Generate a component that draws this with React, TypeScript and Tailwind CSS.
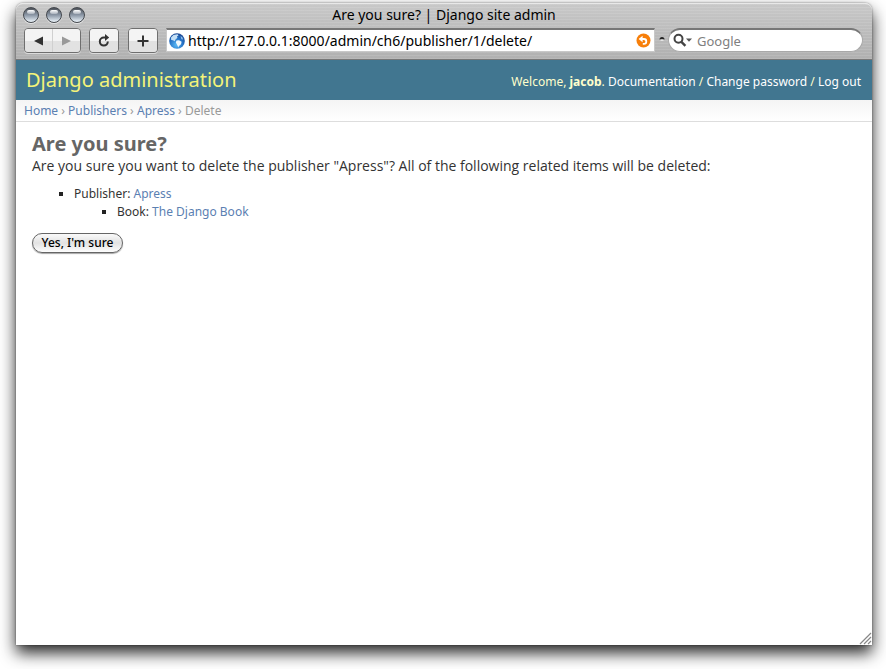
import type { ReactNode } from "react";

function TrafficLight({ label }: { label: string }) {
  return (
    <button
      type="button"
      aria-label={label}
      className="flex size-4 items-end justify-center rounded-full border border-[#44484e] bg-linear-to-b from-[#4d5259] via-[#8b97a6] to-[#eef6fc] shadow-[0_1px_0_#e4e4e4]"
    >
      <span className="mb-2 h-1 w-2 rounded-full bg-linear-to-b from-white to-[#aab2bd]" />
    </button>
  );
}

function ToolButton({ label, children }: { label: string; children: ReactNode }) {
  return (
    <button
      type="button"
      aria-label={label}
      className="flex h-[23px] w-7 items-center justify-center bg-linear-to-b from-[#f4f4f4] from-50% to-[#e2e2e2] to-50%"
    >
      {children}
    </button>
  );
}

const group = "flex shrink-0 overflow-hidden rounded-[4px] border border-[#6f6f6f] shadow-[0_1px_0_#dcdcdc]";

function Toolbar() {
  return (
    <div className="flex h-8 items-start pr-[9px] pl-2">
      <div className={`${group} w-[57px]`}>
        <ToolButton label="Back">
          <svg width="12" height="12" viewBox="0 0 12 12" aria-hidden="true">
            <path d="M1 6 10 1.5v9z" fill="#333" />
          </svg>
        </ToolButton>
        <div className="w-px shrink-0 bg-[#d0d0d0]" />
        <ToolButton label="Forward">
          <svg width="12" height="12" viewBox="0 0 12 12" aria-hidden="true">
            <path d="M10 6 1 1.5v9z" fill="#999" />
          </svg>
        </ToolButton>
      </div>
      <div className={`${group} ml-2`}>
        <ToolButton label="Reload">
          <svg width="14" height="14" viewBox="0 0 14 14" fill="none" aria-hidden="true">
            <path d="M9 3.6H6.8a4 4 0 1 0 4 4" stroke="#333" strokeWidth="2" />
            <path d="M8 0v7l4.2-3.4z" fill="#333" />
          </svg>
        </ToolButton>
      </div>
      <div className={`${group} ml-[9px]`}>
        <ToolButton label="Add bookmark">
          <svg width="12" height="12" viewBox="0 0 12 12" aria-hidden="true">
            <path d="M6 .5v11M.5 6h11" stroke="#333" strokeWidth="2" />
          </svg>
        </ToolButton>
      </div>
      <div className="ml-2 flex h-6 min-w-0 flex-1 items-center border border-t-2 border-[#c8c8c8] border-t-[#777] bg-white pr-[3px] pl-0.5">
        <svg className="shrink-0" width="16" height="16" viewBox="0 0 16 16" aria-hidden="true">
          <defs>
            <radialGradient id="globe" cx="0.45" cy="0.75" r="0.75">
              <stop offset="0" stopColor="#58b8f5" />
              <stop offset="0.6" stopColor="#2470c4" />
              <stop offset="1" stopColor="#1d4690" />
            </radialGradient>
          </defs>
          <circle cx="8" cy="8" r="7.8" fill="url(#globe)" />
          <path d="M2 4.5 4.5 2l4-.8 1 1.2-1.6 1.2.6 1.2L6.5 6.5l-.8 1.8L4 7.2 2.2 7z" fill="#c4e0f6" />
          <path d="M7.5 7.5 10 7.2l2.6 1.6-.6 2.4-2 1.8-.8 1.6-1-2.6-1.4-2.4z" fill="#f0f8fd" />
          <path d="m11.5 3 1.8 1.2.8 2.4-1.7-.4z" fill="#8fc0ea" />
        </svg>
        <input
          aria-label="Address"
          defaultValue="http://127.0.0.1:8000/admin/ch6/publisher/1/delete/"
          className="ml-[3px] h-5 min-w-0 flex-1 bg-transparent text-sm text-black outline-none"
        />
        <button type="button" aria-label="Snap back" className="shrink-0">
          <svg width="15" height="15" viewBox="0 0 15 15" fill="none" aria-hidden="true">
            <circle cx="7.5" cy="7.5" r="7" fill="#f77f0a" />
            <path d="M5.5 6h2.4a2.4 2.4 0 0 1 0 4.8H6.8" stroke="#fff" strokeWidth="1.8" />
            <path d="M2.6 6.1 6.6 2.8v6.4z" fill="#fff" />
          </svg>
        </button>
      </div>
      <svg className="mr-0.5 ml-[3px] mt-2 shrink-0" width="8" height="6" viewBox="0 0 8 6" aria-hidden="true">
        <path d="M1.5 3.4a2.5 2.5 0 0 1 5 0z" fill="#222" />
        <path d="M2.5 3.4h3v1.4h-3z" fill="#eee" />
      </svg>
      <div className="flex h-6 w-[195px] shrink-0 items-center rounded-full border border-t-2 border-[#a8a8a8] border-t-[#777] bg-white pl-1">
        <svg className="shrink-0" width="20" height="15" viewBox="0 0 20 15" fill="none" aria-hidden="true">
          <circle cx="5.5" cy="5.8" r="4" stroke="#444" strokeWidth="2" />
          <path d="m8.4 8.8 4 4" stroke="#444" strokeWidth="2.4" />
          <path d="M13 5.5h6l-3 3.2z" fill="#555" />
        </svg>
        <input
          aria-label="Search"
          placeholder="Google"
          className="ml-1 h-5 min-w-0 flex-1 bg-transparent text-[13px] outline-none placeholder:text-[#808080]"
        />
      </div>
    </div>
  );
}

function Crumb({ children }: { children: ReactNode }) {
  return (
    <>
      <a href="#" className="text-[#5b80b2]">{children}</a>
      {" › "}
    </>
  );
}

export default function App() {
  return (
    <div className="flex min-h-screen flex-col bg-white pt-[3px] pr-3.5 pb-6 pl-4 font-['Noto_Sans',sans-serif]">
      <div className="flex flex-1 flex-col rounded-t-[7px] shadow-[0_8px_16px_rgba(0,0,0,0.85),0_0_2px_rgba(0,0,0,0.5)]">
        <div className="h-[57px] rounded-t-[7px] border-t border-b border-t-[#e8e8e8] border-b-[#777] bg-[repeating-linear-gradient(180deg,rgba(255,255,255,0.10)_0px,rgba(255,255,255,0.10)_1px,transparent_1px,transparent_3px),linear-gradient(180deg,#c8c8c8,#b0b0b0)]">
          <div className="grid h-6 grid-cols-[1fr_auto_1fr] items-center px-[7px] pb-0.5">
            <div className="flex gap-[7px]">
              <TrafficLight label="Close" />
              <TrafficLight label="Minimize" />
              <TrafficLight label="Zoom" />
            </div>
            <div className="text-sm text-black">Are you sure? | Django site admin</div>
          </div>
          <Toolbar />
        </div>

        <header className="flex h-10 items-center justify-between bg-[#417690] pr-[11px] pl-2.5">
          <h1 className="text-xl text-[#f4f379]">Django administration</h1>
          <div className="mt-1 text-xs text-[#ffffcc]">
            Welcome, <strong>jacob</strong>. <a href="#" className="text-white">Documentation</a> /{" "}
            <a href="#" className="text-white">Change password</a> /{" "}
            <a href="#" className="text-white">Log out</a>
          </div>
        </header>

        <nav className="flex h-[22px] items-center border-b border-[#ddd] bg-linear-to-b from-[#f4f4f4] to-white pl-2 text-xs text-[#999]">
          <div>
            <Crumb>Home</Crumb>
            <Crumb>Publishers</Crumb>
            <Crumb>Apress</Crumb>
            Delete
          </div>
        </nav>

        <main className="flex flex-1 flex-col bg-white pl-4 text-[#333]">
          <h2 className="mt-2 text-xl leading-7 font-bold text-[#666]">Are you sure?</h2>
          <p className="font-['Open_Sans',sans-serif] text-sm leading-4">
            Are you sure you want to delete the publisher "Apress"? All of the following related items will be deleted:
          </p>
          <ul className="mt-[11px] ml-[42px] list-[square] text-xs leading-[18px] marker:text-[#222]">
            <li>
              Publisher: <a href="#" className="text-[#5b80b2]">Apress</a>
              <ul className="ml-[43px] list-[square]">
                <li>
                  Book: <a href="#" className="text-[#5b80b2]">The Django Book</a>
                </li>
              </ul>
            </li>
          </ul>
          <button
            type="button"
            className="mt-3 h-5 w-[91px] rounded-full border border-[#666] bg-linear-to-b from-[#fafafa] via-[#e2e2e2] to-[#fdfdfd] text-xs leading-4 font-medium text-black shadow-[0_1px_1px_rgba(0,0,0,0.35)]"
          >
            Yes, I'm sure
          </button>
          <svg className="mt-auto self-end" width="13" height="13" viewBox="0 0 13 13" aria-hidden="true">
            <path d="M1 12 12 1M5 12l7-7M9 12l3-3" stroke="#888" strokeWidth="1.2" />
          </svg>
        </main>
      </div>
    </div>
  );
}
